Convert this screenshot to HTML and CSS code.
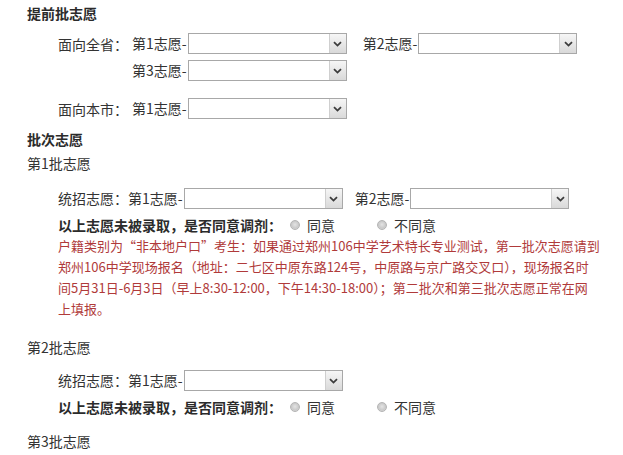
FILE: index.html
```html
<!DOCTYPE html>
<html lang="zh-CN">
<head>
<meta charset="utf-8">
<title>志愿填报</title>
<link rel="stylesheet" href="styles.css">
</head>
<body>
<div class="page">
  <div class="title">提前批志愿</div>

  <div class="row r1">
    <span class="lab">面向全省：</span>
    <span class="txt">第1志愿-</span>
    <span class="sel"><span class="arrow"><svg width="9" height="6" viewBox="0 0 9 6"><path d="M1 1.2 L4.5 4.6 L8 1.2" fill="none" stroke="#3c3c3c" stroke-width="1.8"/></svg></span></span>
    <span class="txt gap16">第2志愿-</span>
    <span class="sel"><span class="arrow"><svg width="9" height="6" viewBox="0 0 9 6"><path d="M1 1.2 L4.5 4.6 L8 1.2" fill="none" stroke="#3c3c3c" stroke-width="1.8"/></svg></span></span>
  </div>
  <div class="row r2">
    <span class="lab"></span>
    <span class="txt">第3志愿-</span>
    <span class="sel"><span class="arrow"><svg width="9" height="6" viewBox="0 0 9 6"><path d="M1 1.2 L4.5 4.6 L8 1.2" fill="none" stroke="#3c3c3c" stroke-width="1.8"/></svg></span></span>
  </div>
  <div class="row r3">
    <span class="lab">面向本市：</span>
    <span class="txt">第1志愿-</span>
    <span class="sel"><span class="arrow"><svg width="9" height="6" viewBox="0 0 9 6"><path d="M1 1.2 L4.5 4.6 L8 1.2" fill="none" stroke="#3c3c3c" stroke-width="1.8"/></svg></span></span>
  </div>

  <div class="title t2">批次志愿</div>

  <div class="batch b1">第1批志愿</div>
  <div class="row s1">
    <span class="txt">统招志愿：第1志愿-</span>
    <span class="sel"><span class="arrow"><svg width="9" height="6" viewBox="0 0 9 6"><path d="M1 1.2 L4.5 4.6 L8 1.2" fill="none" stroke="#3c3c3c" stroke-width="1.8"/></svg></span></span>
    <span class="txt gap12">第2志愿-</span>
    <span class="sel"><span class="arrow"><svg width="9" height="6" viewBox="0 0 9 6"><path d="M1 1.2 L4.5 4.6 L8 1.2" fill="none" stroke="#3c3c3c" stroke-width="1.8"/></svg></span></span>
  </div>
  <div class="radios">
    <span class="q">以上志愿未被录取，是否同意调剂：</span>
    <span class="radio"></span><span class="opt">同意</span>
    <span class="radio r-second"></span><span class="opt">不同意</span>
  </div>
  <div class="note">户籍类别为“非本地户口”考生：如果通过郑州106中学艺术特长专业测试，第一批次志愿请到<br>郑州106中学现场报名（地址：二七区中原东路124号，中原路与京广路交叉口），现场报名时<br>间5月31日-6月3日（早上8:30-12:00，下午14:30-18:00）；第二批次和第三批次志愿正常在网<br>上填报。</div>

  <div class="batch b2">第2批志愿</div>
  <div class="row s2">
    <span class="txt">统招志愿：第1志愿-</span>
    <span class="sel"><span class="arrow"><svg width="9" height="6" viewBox="0 0 9 6"><path d="M1 1.2 L4.5 4.6 L8 1.2" fill="none" stroke="#3c3c3c" stroke-width="1.8"/></svg></span></span>
  </div>
  <div class="radios">
    <span class="q">以上志愿未被录取，是否同意调剂：</span>
    <span class="radio"></span><span class="opt">同意</span>
    <span class="radio r-second"></span><span class="opt">不同意</span>
  </div>

  <div class="batch b3">第3批志愿</div>
</div>
</body>
</html>
```

FILE: styles.css
```css
html, body {
  margin: 0;
  padding: 0;
  background: #ffffff;
}
body {
  font-family: "Noto Sans CJK SC", "Microsoft YaHei", sans-serif;
  font-size: 14px;
  color: #333333;
  width: 623px;
  height: 455px;
  overflow: hidden;
}
.page {
  padding: 3px 0 0 27px;
}
.title {
  font-weight: bold;
  line-height: 20px;
  height: 20px;
  color: #2b2b2b;
}
.r1 { margin-top: 10px; }
.t2 { margin-top: 10px; }

.row {
  display: flex;
  align-items: center;
  height: 21px;
  padding-left: 31px;
  white-space: nowrap;
}
.r2 { margin-top: 6px; }
.r3 { margin-top: 17px; }
.s1 { margin-top: 15px; }
.s2 { margin-top: 13px; }

.lab {
  display: inline-block;
  width: 74px;
}
.txt { line-height: 21px; }
.gap16 { margin-left: 16px; }
.gap12 { margin-left: 12px; }

.sel {
  box-sizing: border-box;
  width: 159px;
  height: 21px;
  margin-left: 1px;
  border: 1px solid #a8a8a8;
  background: #fff;
  display: flex;
  justify-content: flex-end;
}
.arrow {
  box-sizing: border-box;
  width: 17px;
  height: 100%;
  border-left: 1px solid #cfcfcf;
  background: linear-gradient(#f6f6f6, #d9d9d9);
  display: flex;
  align-items: center;
  justify-content: center;
}

.batch {
  line-height: 20px;
  height: 20px;
}
.b1 { margin-top: 4px; }
.b2 { margin-top: 18px; }
.b3 { margin-top: 14px; }

.radios {
  display: flex;
  align-items: center;
  height: 20px;
  margin-top: 6px;
  padding-left: 31px;
  white-space: nowrap;
}
.q {
  font-weight: bold;
  color: #2b2b2b;
}
.radio {
  box-sizing: border-box;
  width: 10px;
  height: 10px;
  border-radius: 50%;
  border: 1px solid #b4b4b4;
  background: radial-gradient(circle at 50% 45%, #e4e4e4 0, #c9c9c9 60%, #efefef 100%);
  margin-left: 8px;
  margin-right: 7px;
}
.r-second { margin-left: 42px; }

.note {
  padding-left: 31px;
  font-size: 13px;
  line-height: 21px;
  color: #b03a3a;
  white-space: nowrap;
}
```
